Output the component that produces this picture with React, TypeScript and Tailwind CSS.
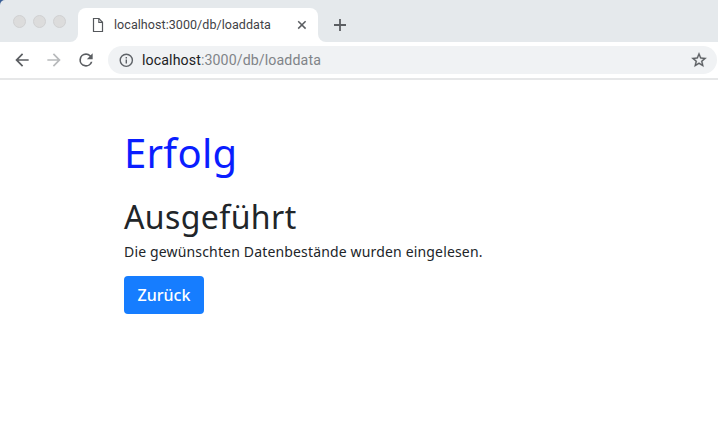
import React from "react";

function TabStrip() {
  return (
    <div className="bg-[#395f96]">
      <div className="flex h-[42px] rounded-tl-[5px] bg-[#e5e9ec]">
        <div className="flex w-[70px] shrink-0 gap-[7px] pt-[15px] pl-[12.5px]">
          {[0, 1, 2].map((n) => (
            <span key={n} className="size-[13px] shrink-0 rounded-full border border-[#d0d1d2] bg-[#dcdcdc]" />
          ))}
        </div>
        <div className="size-2 self-end bg-white">
          <div className="size-full rounded-br-lg bg-[#e5e9ec]" />
        </div>
        <div className="mt-2 flex w-[240px] items-center rounded-t-lg bg-white pl-[14px]">
          <svg width="12" height="16" viewBox="0 0 12 16" fill="none" stroke="#55585c" strokeWidth="1.2">
            <path d="M1.5 1.5h5.4l3.6 3.8v9.2h-9z" />
            <path d="M6.8 1.5v3.9h3.7" strokeWidth="1.1" />
          </svg>
          <span className="ml-[10px] w-[158px] whitespace-nowrap text-[12.5px] leading-4 text-[#3f4246]">
            <span className="tracking-[0.06px]">localhost:3000/db/loaddata</span>
          </span>
          <svg className="ml-[25px]" width="10" height="10" viewBox="0 0 10 10" stroke="#5b5e62" strokeWidth="1.5">
            <path d="M1.2 1.2l7.4 7.4M8.6 1.2L1.2 8.6" />
          </svg>
        </div>
        <div className="size-2 self-end bg-white">
          <div className="size-full rounded-bl-lg bg-[#e5e9ec]" />
        </div>
        <svg className="mt-[19px] ml-[8px]" width="12" height="12" viewBox="0 0 12 12" stroke="#5b5e62" strokeWidth="1.8">
          <path d="M6 0v12M0 6h12" />
        </svg>
      </div>
    </div>
  );
}

function Toolbar() {
  return (
    <div className="flex h-[38px] items-start border-b-2 border-[#e6e7e8] bg-white pt-1">
      <div className="flex h-7 w-[108px] shrink-0 items-center pl-[12px]">
        <svg width="20" height="20" viewBox="0 0 24 24" fill="#5b5e62">
          <path d="M20 11H7.83l5.59-5.59L12 4l-8 8 8 8 1.41-1.41L7.83 13H20v-2z" />
        </svg>
        <svg className="ml-3" width="20" height="20" viewBox="0 0 24 24" fill="#b8babc">
          <path d="M12 4l-1.41 1.41L16.17 11H4v2h12.17l-5.58 5.59L12 20l8-8z" />
        </svg>
        <svg className="ml-3" width="20" height="20" viewBox="0 0 24 24" fill="#5b5e62">
          <path d="M17.65 6.35A7.96 7.96 0 0 0 12 4a8 8 0 1 0 7.73 10h-2.08A6 6 0 1 1 12 6c1.66 0 3.14.69 4.22 1.78L13 11h7V4l-2.35 2.35z" />
        </svg>
      </div>
      <div className="flex h-7 w-[609px] items-center rounded-full bg-[#f0f2f4] pr-[9px] pl-[10px]">
        <svg width="16" height="16" viewBox="0 0 16 16" fill="none" stroke="#5f6368" strokeWidth="1.4">
          <circle cx="8.3" cy="8.3" r="6.1" />
          <path d="M8.3 7.4v4M8.3 4.9v1.5" />
        </svg>
        <span className="ml-[8px] text-[14.2px] leading-5 tracking-[0.1px] text-[#202124]">
          localhost<span className="text-[#808488]">:3000/db/loaddata</span>
        </span>
        <svg className="ml-auto" width="18" height="18" viewBox="0 0 24 24" fill="#5b5e62" stroke="#5b5e62" strokeWidth="0.4">
          <path d="M22 9.24l-7.19-.62L12 2 9.19 8.63 2 9.24l5.46 4.73L5.82 21 12 17.27 18.18 21l-1.63-7.03L22 9.24zM12 15.4l-3.76 2.27 1-4.28-3.32-2.88 4.38-.38L12 6.1l1.71 4.04 4.38.38-3.32 2.88 1 4.28L12 15.4z" />
        </svg>
      </div>
    </div>
  );
}

export default function App() {
  return (
    <div className="h-[429px] w-[718px] overflow-hidden bg-white font-['Roboto','Liberation_Sans',sans-serif]">
      <TabStrip />
      <Toolbar />
      <main className="flex flex-col items-start pt-[49px] pl-[124px] font-['Noto_Sans',sans-serif] text-[#212529]">
        <h1 className="text-[40px] leading-[48px] tracking-[0.3px] text-[#0a1eff]">Erfolg</h1>
        <h2 className="mt-[21px] text-[32px] leading-[38px] tracking-[0.4px]">Ausgeführt</h2>
        <p className="mt-[4px] text-[14px] leading-6 tracking-[0.16px] whitespace-nowrap">
          Die gewünschten Datenbestände wurden eingelesen.
        </p>
        <button className="mt-[12px] h-[38px] w-[80px] rounded bg-[#167dff] text-[16px] leading-6 font-medium text-white">
          Zurück
        </button>
      </main>
    </div>
  );
}
